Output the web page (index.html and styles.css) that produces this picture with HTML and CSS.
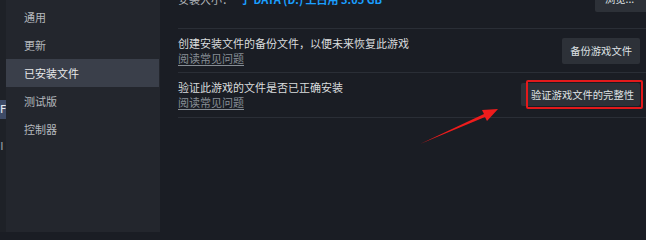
FILE: index.html
```html
<!DOCTYPE html>
<html lang="zh-CN">
<head>
<meta charset="utf-8">
<link rel="stylesheet" href="styles.css">
</head>
<body>
<div class="app">
  <div class="strip">
    <div class="strip-badge">EF</div>
    <div class="strip-text">FI</div>
  </div>
  <nav class="sidebar">
    <div class="nav-item">通用</div>
    <div class="nav-item">更新</div>
    <div class="nav-item active">已安装文件</div>
    <div class="nav-item">测试版</div>
    <div class="nav-item">控制器</div>
  </nav>
  <main class="main">
    <div class="row row-top">
      <div class="size-line"><span class="label">安装大小：</span><span class="value">于 DATA (D:) 上占用 3.05 GB</span></div>
      <button class="btn btn-browse">浏览...</button>
    </div>
    <div class="row">
      <div class="desc">
        <div class="desc-title">创建安装文件的备份文件，以便未来恢复此游戏</div>
        <a class="faq">阅读常见问题</a>
      </div>
      <button class="btn btn-backup">备份游戏文件</button>
    </div>
    <div class="row">
      <div class="desc">
        <div class="desc-title">验证此游戏的文件是否已正确安装</div>
        <a class="faq">阅读常见问题</a>
      </div>
      <button class="btn btn-verify">验证游戏文件的完整性<span class="mark"></span></button>
    </div>
  </main>
  <svg class="arrow" width="646" height="232" viewBox="0 0 646 232">
    <path d="M420 144 L484 114 L482 110 L498 109 L487 121 L485 117 Z" fill="#ee1c1c"/>
  </svg>
</div>
</body>
</html>
```
FILE: styles.css
```css
* { box-sizing: border-box; }
html, body { margin: 0; padding: 0; }
body {
  width: 646px;
  height: 232px;
  overflow: hidden;
  background: #1a1d24;
  font-family: "Noto Sans CJK SC", "Noto Sans", sans-serif;
}
.app {
  position: relative;
  display: flex;
  height: 232px;
}
.strip {
  width: 6px;
  background: #1e2127;
  display: flex;
  flex-direction: column;
  overflow: hidden;
  padding-top: 100px;
}
.strip-badge {
  height: 19px;
  background: #3e4b67;
  color: #e8ecf2;
  font-size: 11px;
  line-height: 19px;
  font-family: "DejaVu Sans", sans-serif;
  margin-left: -7px;
  white-space: nowrap;
}
.strip-text {
  margin-top: 20px;
  color: #9aa0a8;
  font-size: 11px;
  line-height: 16px;
  font-family: "DejaVu Sans", sans-serif;
  margin-left: -6px;
  white-space: nowrap;
}
.sidebar {
  width: 154px;
  background: #23262d;
  padding-top: 3px;
  display: flex;
  flex-direction: column;
}
.nav-item {
  height: 28px;
  line-height: 28px;
  padding-left: 18px;
  font-size: 11px;
  color: #b4b8bd;
}
.nav-item.active {
  background: #3a3f4a;
  color: #e8e9ea;
  margin-right: 1px;
}
.main {
  flex: 1;
  padding-left: 18px;
  display: flex;
  flex-direction: column;
}
.row {
  display: flex;
  justify-content: space-between;
  align-items: center;
  border-bottom: 1px solid #2a2e36;
  padding-right: 6px;
  height: 44px;
}
.row + .row + .row { height: 45px; }
.row-top {
  margin-top: -14px;
  height: 43px;
  align-items: flex-start;
}
.size-line {
  font-size: 11px;
  line-height: 26px;
}
.size-line .label { color: #b0b4b9; }
.size-line .value {
  color: #1a9fff;
  font-weight: bold;
  margin-left: 7px;
}
.desc { display: flex; flex-direction: column; }
.desc-title {
  font-size: 11px;
  line-height: 15px;
  color: #d9dcde;
}
.faq {
  font-size: 11px;
  line-height: 15px;
  color: #868d95;
  text-decoration: underline;
  text-underline-offset: 2px;
}
.btn {
  position: relative;
  font-family: inherit;
  font-size: 10.3px;
  color: #dfe2e5;
  background: #2d3138;
  border: 0;
  border-radius: 2px;
  height: 26px;
  padding: 0 10px;
  line-height: 26px;
}
.btn-backup {
  padding: 0 8px;
}
.btn-browse {
  margin-right: -20px;
  width: 65px;
  text-align: left;
}
.btn-verify {
  height: 23px;
  line-height: 23px;
  padding: 0 6px 0 10px;
  margin-top: -1px;
}
.mark {
  position: absolute;
  left: 5px;
  right: -3px;
  top: -3px;
  bottom: -3px;
  border: 2px solid #e3191b;
  border-radius: 2px;
}
.arrow {
  position: absolute;
  left: 0;
  top: 0;
  pointer-events: none;
}
```
